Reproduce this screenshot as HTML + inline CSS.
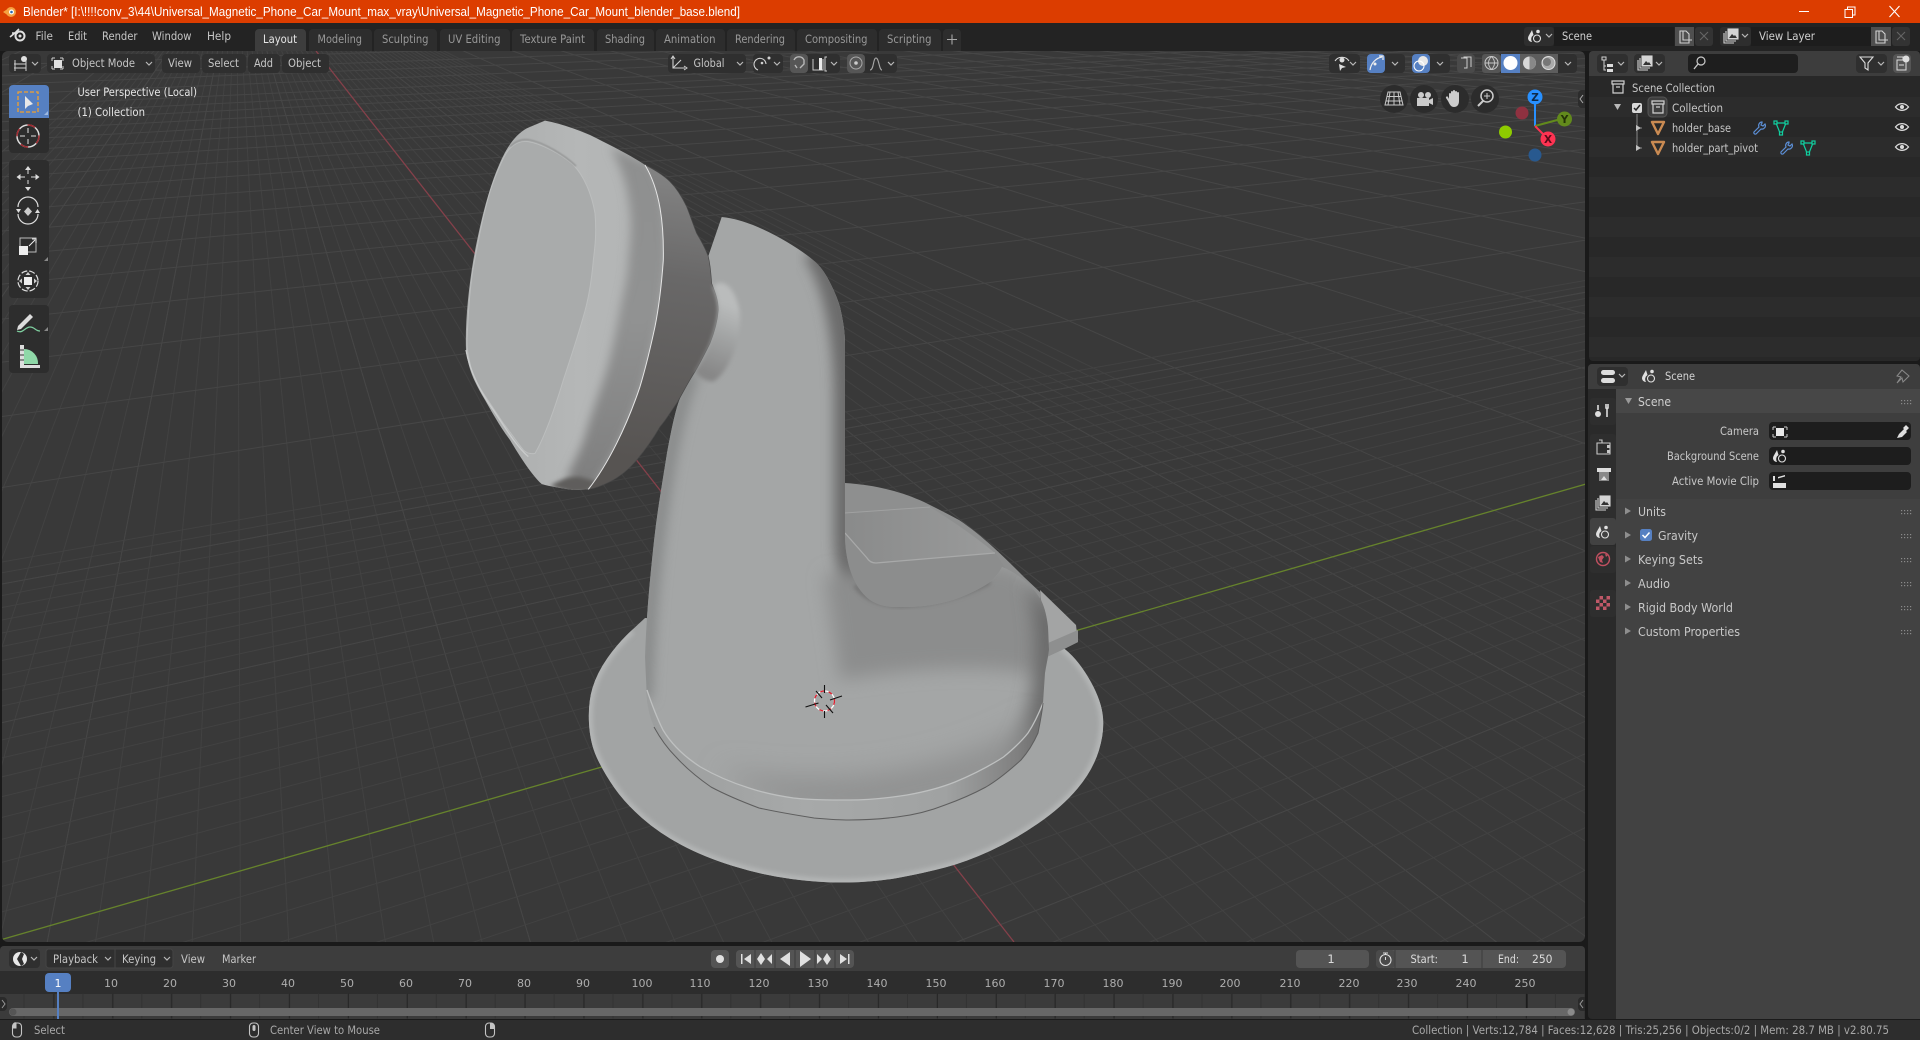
<!DOCTYPE html>
<html><head><meta charset="utf-8"><title>Blender</title>
<style>
html,body{margin:0;padding:0;background:#1a1a1a;overflow:hidden;width:1920px;height:1040px}
svg{display:block}
text{font-family:"DejaVu Sans",sans-serif;font-size:11.5px;fill:#c6c6c6;white-space:pre}
.tab{fill:#989898}
.num{fill:#aeaeae;font-size:11px;text-anchor:middle}
.lab{fill:#c8c8c8}
.p{fill:#c8c8c8;font-size:12px}
</style></head><body>
<svg width="1920" height="1040" viewBox="0 0 1920 1040" xmlns="http://www.w3.org/2000/svg">
<defs>
<clipPath id="vp"><rect x="2" y="51" width="1583" height="891" rx="6"/></clipPath>
<filter id="b2" x="-20%" y="-20%" width="140%" height="140%"><feGaussianBlur stdDeviation="2"/></filter>
<filter id="b6" x="-30%" y="-30%" width="160%" height="160%"><feGaussianBlur stdDeviation="6"/></filter>
<filter id="b9" x="-30%" y="-30%" width="160%" height="160%"><feGaussianBlur stdDeviation="9"/></filter>
<filter id="b14" x="-40%" y="-40%" width="180%" height="180%"><feGaussianBlur stdDeviation="14"/></filter>
<path id="chev" d="M0 0l3 3 3-3" fill="none" stroke="#b8b8b8" stroke-width="1.2"/>
<g id="scn"><path d="M4 1C2 5 0 7 0 9.5A4 4 0 0 0 4 13A5 5 0 0 1 5.5 6Z" fill="#e0e0e0"/><circle cx="9" cy="9.5" r="3.5" fill="none" stroke="#e0e0e0" stroke-width="1.1"/><circle cx="10" cy="2.5" r="1.8" fill="#e0e0e0"/></g>
<g id="lay" fill="none" stroke="#d4d4d4" stroke-width="1.1"><rect x="4" y="0" width="10" height="10" fill="#d4d4d4"/><path d="M5 9l3-4 2 2 1-1 2 3z" fill="#333" stroke="none"/><path d="M2 2v10h10M0 4v10h10"/></g>
<g id="eye"><path d="M-6.5 0C-3-4.5 3-4.5 6.5 0C3 4.500-3 4.500-6.5 0Z" fill="none" stroke="#dcdcdc" stroke-width="1.3"/><circle r="2" fill="#dcdcdc"/></g>
<path id="tri" d="M-6-5H6L0 7Z" fill="none" stroke="#c98a52" stroke-width="2.4" stroke-linejoin="round"/>
<g id="wr" fill="none" stroke="#5c8fd6" stroke-width="1.2"><path d="M7 0a3.5 3.5 0 0 0-3 5L-1 10a1.5 1.5 0 0 0 2 2L6 7A3.5 3.500 0 0 0 10 2L8 4 6 3 7 1Z"/></g>
<g id="ms" fill="none" stroke="#10d0a0" stroke-width="1.2"><path d="M-5-4H5L1 6H-1Z"/><rect x="-7" y="-6" width="3" height="3" fill="#282828"/><rect x="4" y="-6" width="3" height="3" fill="#282828"/><rect x="-1.5" y="5" width="3" height="3" fill="#282828"/></g>
<g id="coll" fill="none" stroke="#d0d0d0" stroke-width="1.2"><path d="M-6-6H6V-3H-6ZM-5-3V6H5V-3M-2 0H2"/></g>
<g id="grip" fill="#8a8a8a"><rect x="0" y="0" width="1.2" height="1.2"/><rect x="3" y="0" width="1.2" height="1.2"/><rect x="6" y="0" width="1.2" height="1.2"/><rect x="9" y="0" width="1.2" height="1.2"/><rect x="0" y="3" width="1.2" height="1.2"/><rect x="3" y="3" width="1.2" height="1.2"/><rect x="6" y="3" width="1.2" height="1.2"/><rect x="9" y="3" width="1.2" height="1.2"/></g>
<path id="rt" d="M0-3.5L6 0 0 3.5Z" fill="#8e8e8e"/>
<g id="mouse" fill="none" stroke="#c4c4c4" stroke-width="1.1"><rect x="-4.5" y="-7" width="9" height="14" rx="3.5"/></g>

<clipPath id="bodyc"><path d="M721.7 217C733 218 745 222 753 225C765 230 777 236 787 242C797 248 806 254 813 260C819 265 823 270 827 277C833 288 837 297 840 307C843 320 845 332 845 343L845 533C845 545 846 551 847 557C849 568 852 576 855.5 583C860 591 866 598 873 602C881 606 889 607 897 607C908 607 920 607 931 605C943 603 955 600 966 595C975 591 983 587 990 582C995 578 999 573 1002 567C1010 570 1017 575 1024 580C1031 586 1037 593 1041 600C1045 608 1047 618 1048 627L1049 650C1048 658 1046 666 1045 673L1043 703C1042 713 1040 723 1038 733C1034 742 1028 752 1021 760C1010 770 998 780 986 787C973 794 959 800 945 805C930 811 914 815 897 817C881 819 865 820 849 820C837 820 826 819 814 818C795 815 777 812 759 808C743 802 726 795 711 787C698 778 686 768 676 757C667 748 660 738 654 727C650 718 648 709 647 700L645 657C646 628 648 600 651 570C653 550 655 530 658 510C661 490 664 472 667 453C670 437 673 421 677 407C681 394 687 383 693 373L708 257Z"/></clipPath>
<clipPath id="discc"><path d="M631.5 630.5Q618 643 607.5 658Q597 673 592.5 688Q588 703 589 723Q590 743 597 758Q604 773 614.5 788Q625 803 642 818Q659 833 681.5 845Q704 857 733 866Q762 875 791.5 879Q821 883 848.5 882.5Q876 882 900 877.5Q924 873 945 867.5Q966 862 990 851Q1014 840 1038 823.5Q1062 807 1077.5 788.5Q1093 770 1099 750Q1105 730 1102.5 713.5Q1100 697 1088 677Q1076 657 1062 647L1048 637L645 618Z"/></clipPath>
<clipPath id="headc"><path d="M255 32C300 40 350 58 390 75C450 105 510 135 555 165C600 240 612 340 610 450C605 520 595 600 585 650C570 720 555 780 540 830C520 890 495 950 470 1000C445 1050 415 1100 385 1138L340 1140C310 1135 270 1130 245 1122C215 1095 180 1040 150 990C120 950 95 905 75 870C45 820 25 780 18 720C15 640 25 540 40 450C60 340 85 240 115 170C140 110 165 75 200 55Z"/></clipPath>

<linearGradient id="rim" gradientUnits="userSpaceOnUse" x1="20" y1="0" x2="500" y2="0"><stop offset="0" stop-color="#a9abab"/><stop offset=".7" stop-color="#b5b7b7"/><stop offset="1" stop-color="#b3b5b5"/></linearGradient>
<linearGradient id="band" gradientUnits="userSpaceOnUse" x1="0" y1="110" x2="0" y2="1138"><stop offset="0" stop-color="#8e8f8f"/><stop offset=".5" stop-color="#919292"/><stop offset="1" stop-color="#7e7e7e"/></linearGradient>
<linearGradient id="cone" gradientUnits="userSpaceOnUse" x1="640" y1="200" x2="520" y2="1050"><stop offset="0" stop-color="#828282"/><stop offset=".35" stop-color="#696868"/><stop offset="1" stop-color="#575452"/></linearGradient>
<linearGradient id="ball" gradientUnits="userSpaceOnUse" x1="745" y1="790" x2="825" y2="590"><stop offset="0" stop-color="#878787"/><stop offset=".6" stop-color="#a4a6a6"/><stop offset="1" stop-color="#babcbc"/></linearGradient>
<linearGradient id="collar" gradientUnits="userSpaceOnUse" x1="647" y1="0" x2="1045" y2="0"><stop offset="0" stop-color="#9c9e9e"/><stop offset=".4" stop-color="#a7a9a9"/><stop offset=".75" stop-color="#a0a2a2"/><stop offset=".93" stop-color="#808080"/><stop offset="1" stop-color="#6c6c6c"/></linearGradient>
<linearGradient id="slab" gradientUnits="userSpaceOnUse" x1="850" y1="0" x2="1000" y2="0"><stop offset="0" stop-color="#8a8b8b"/><stop offset="1" stop-color="#9a9b9b"/></linearGradient>
</defs>

<!-- title bar -->
<rect x="0" y="0" width="1920" height="23" fill="#dc3d00"/>
<circle cx="11" cy="12" r="5" fill="#f5a040"/><path d="M3 12l6-4v8z" fill="#f5a040"/><circle cx="11.5" cy="12" r="2.5" fill="#fff"/><circle cx="11.5" cy="12" r="1.3" fill="#2a6ab0"/>
<text x="23" y="16" textLength="717" lengthAdjust="spacingAndGlyphs" style="font-family:'Liberation Sans',sans-serif;font-size:13px;fill:#fff">Blender* [I:\!!!!conv_3\44\Universal_Magnetic_Phone_Car_Mount_max_vray\Universal_Magnetic_Phone_Car_Mount_blender_base.blend]</text>
<path d="M1799 11.5h10" stroke="#fff" stroke-width="1"/>
<path d="M1845 9.5h7.5v8h-7.5zM1847.5 9.5v-2.5h7.500v8h-2.500" fill="none" stroke="#fff" stroke-width="1"/>
<path d="M1889.5 6l10 11M1899.5 6l-10 11" stroke="#fff" stroke-width="1.1"/>

<!-- top bar -->
<rect x="0" y="23" width="1920" height="28" fill="#232323"/>
<circle cx="20" cy="36" r="4.5" fill="none" stroke="#e0e0e0" stroke-width="2"/><circle cx="20" cy="36" r="1.5" fill="#e0e0e0"/><path d="M10 37l6-5 3-3M12 33h6" stroke="#e0e0e0" stroke-width="1.6" fill="none"/>
<text x="35.5" y="40" textLength="17.5" lengthAdjust="spacingAndGlyphs">File</text>
<text x="68" y="40" textLength="19" lengthAdjust="spacingAndGlyphs">Edit</text>
<text x="102" y="40" textLength="35.5" lengthAdjust="spacingAndGlyphs">Render</text>
<text x="152" y="40" textLength="39.5" lengthAdjust="spacingAndGlyphs">Window</text>
<text x="207" y="40" textLength="24" lengthAdjust="spacingAndGlyphs">Help</text>
<g fill="#2d2d2d">
<path d="M255 51V33a4 4 0 0 1 4-4h43a4 4 0 0 1 4 4v18z" fill="#3d3d3d"/>
<path d="M309 51V33a4 4 0 0 1 4-4h55a4 4 0 0 1 4 4v18z"/>
<path d="M374 51V33a4 4 0 0 1 4-4h55a4 4 0 0 1 4 4v18z"/>
<path d="M440 51V33a4 4 0 0 1 4-4h62a4 4 0 0 1 4 4v18z"/>
<path d="M512 51V33a4 4 0 0 1 4-4h74a4 4 0 0 1 4 4v18z"/>
<path d="M597 51V33a4 4 0 0 1 4-4h49a4 4 0 0 1 4 4v18z"/>
<path d="M656 51V33a4 4 0 0 1 4-4h61a4 4 0 0 1 4 4v18z"/>
<path d="M727 51V33a4 4 0 0 1 4-4h60a4 4 0 0 1 4 4v18z"/>
<path d="M797 51V33a4 4 0 0 1 4-4h72a4 4 0 0 1 4 4v18z"/>
<path d="M879 51V33a4 4 0 0 1 4-4h54a4 4 0 0 1 4 4v18z"/>
<path d="M943 51V33a4 4 0 0 1 4-4h10a4 4 0 0 1 4 4v18z"/>
</g>
<text x="263" y="43" textLength="34" lengthAdjust="spacingAndGlyphs" style="fill:#e6e6e6">Layout</text>
<text class="tab" x="317.5" y="43" textLength="44.5" lengthAdjust="spacingAndGlyphs">Modeling</text>
<text class="tab" x="382" y="43" textLength="46.5" lengthAdjust="spacingAndGlyphs">Sculpting</text>
<text class="tab" x="448" y="43" textLength="52.5" lengthAdjust="spacingAndGlyphs">UV Editing</text>
<text class="tab" x="520" y="43" textLength="65" lengthAdjust="spacingAndGlyphs">Texture Paint</text>
<text class="tab" x="605" y="43" textLength="40" lengthAdjust="spacingAndGlyphs">Shading</text>
<text class="tab" x="664" y="43" textLength="51.5" lengthAdjust="spacingAndGlyphs">Animation</text>
<text class="tab" x="735" y="43" textLength="50" lengthAdjust="spacingAndGlyphs">Rendering</text>
<text class="tab" x="805" y="43" textLength="62.5" lengthAdjust="spacingAndGlyphs">Compositing</text>
<text class="tab" x="887" y="43" textLength="44.5" lengthAdjust="spacingAndGlyphs">Scripting</text>
<path d="M952 34.5v10M947 39.5h10" stroke="#a8a8a8" stroke-width="1.1"/>

<!-- scene selectors -->
<rect x="1524" y="27" width="30" height="19" rx="3" fill="#2e2e2e"/>
<use href="#scn" x="1528" y="29"/><use href="#chev" x="1546" y="34"/>
<rect x="1554" y="27" width="120" height="19" fill="#1d1d1d"/>
<text x="1562" y="40" textLength="30" lengthAdjust="spacingAndGlyphs" style="fill:#d0d0d0">Scene</text>
<rect x="1675" y="27" width="19" height="19" fill="#4f4f4f"/><path d="M1680 31h6l3 3v9h-9z M1683 31v9h9" fill="none" stroke="#d0d0d0" stroke-width="1.1"/>
<rect x="1695" y="27" width="18" height="19" rx="3" fill="#333"/><path d="M1700 32l8 8M1708 32l-8 8" stroke="#666" stroke-width="1.1"/>
<rect x="1720" y="27" width="31" height="19" rx="3" fill="#2e2e2e"/>
<use href="#lay" x="1724" y="29"/><use href="#chev" x="1742" y="34"/>
<rect x="1751" y="27" width="120" height="19" fill="#1d1d1d"/>
<text x="1759" y="40" textLength="56" lengthAdjust="spacingAndGlyphs" style="fill:#d0d0d0">View Layer</text>
<rect x="1871" y="27" width="20" height="19" fill="#4f4f4f"/><path d="M1876 31h6l3 3v9h-9z M1879 31v9h9" fill="none" stroke="#d0d0d0" stroke-width="1.1"/>
<rect x="1892" y="27" width="18" height="19" rx="3" fill="#333"/><path d="M1897 32l8 8M1905 32l-8 8" stroke="#666" stroke-width="1.1"/>

<!-- 3D viewport -->
<g clip-path="url(#vp)">
<rect x="0" y="51" width="1590" height="895" fill="#393939"/>
<g transform="translate(237 -50) scale(.87) translate(-237 50)" fill="none" stroke-width="1.15">
<path stroke="#424242" d="M237-50L-991 1100M237-50L-935 1100M237-50L-879 1100M237-50L-823 1100M237-50L-767 1100M237-50L-711 1100M237-50L-655 1100M237-50L-599 1100M237-50L-543 1100M237-50L-487 1100M237-50L-431 1100M237-50L-375 1100M237-50L-319 1100M237-50L-263 1100M237-50L-207 1100M237-50L-151 1100M237-50L-95 1100M237-50L-39 1100M237-50L17 1100M237-50L73 1100M237-50L129 1100M237-50L185 1100M237-50L241 1100M237-50L297 1100M237-50L353 1100M237-50L409 1100M237-50L465 1100M237-50L521 1100M237-50L577 1100M237-50L633 1100M237-50L689 1100M237-50L745 1100M237-50L801 1100M237-50L857 1100M237-50L913 1100M237-50L969 1100M237-50L1025 1100M237-50L1081 1100M237-50L1193 1100M237-50L1249 1100M237-50L1305 1100M237-50L1361 1100M237-50L1417 1100M237-50L1473 1100M237-50L1529 1100M237-50L1585 1100M237-50L1641 1100M237-50L1697 1100M237-50L1753 1100M237-50L1809 1100M237-50L1865 1100M237-50L1921 1100M237-50L1977 1100M237-50L2033 1100M237-50L2089 1100M237-50L2145 1100M237-50L2201 1100M237-50L2257 1100M237-50L2313 1100M237-50L2369 1100M237-50L2425 1100M237-50L2481 1100M237-50L2537 1100M237-50L2593 1100"/>
<path stroke="#464646" d="M237-50L-1103 1100M237-50L-1663 1100M237-50L-2223 1100M237-50L2817 1100M237-50L3377 1100M237-50L3937 1100M237-50L4497 1100M237-50L5057 1100M237-50L5617 1100M237-50L6177 1100M237-50L6737 1100M237-50L7297 1100M237-50L7857 1100M237-50L8417 1100M237-50L8977 1100M237-50L9537 1100M237-50L10097 1100M237-50L10657 1100M237-50L11217 1100M237-50L11777 1100M237-50L12337 1100M237-50L12897 1100M237-50L13457 1100M237-50L17 1100M237-50L577 1100M237-50L1697 1100M237-50L2257 1100M237-50L-543 1100"/>
</g>
<g transform="translate(3443 -50) scale(.87) translate(-3443 50)" fill="none" stroke-width="1.15">
<path stroke="#424242" d="M3443-50L-3023 1100M3443-50L-2911 1100M3443-50L-2799 1100M3443-50L-2687 1100M3443-50L-2575 1100M3443-50L-2463 1100M3443-50L-2351 1100M3443-50L-2239 1100M3443-50L-2127 1100M3443-50L-2015 1100M3443-50L-1903 1100M3443-50L-1791 1100M3443-50L-1679 1100M3443-50L-1567 1100M3443-50L-1455 1100M3443-50L-1343 1100M3443-50L-1231 1100M3443-50L-1119 1100M3443-50L-1007 1100M3443-50L-895 1100M3443-50L-783 1100M3443-50L-671 1100M3443-50L-447 1100M3443-50L-335 1100M3443-50L-223 1100M3443-50L-111 1100M3443-50L1 1100M3443-50L113 1100M3443-50L225 1100M3443-50L337 1100M3443-50L449 1100M3443-50L561 1100M3443-50L673 1100M3443-50L785 1100M3443-50L897 1100M3443-50L1009 1100M3443-50L1121 1100M3443-50L1233 1100M3443-50L1345 1100"/>
<path stroke="#464646" d="M3443-50L-3919 1100M3443-50L-5039 1100M3443-50L-6159 1100M3443-50L-7279 1100M3443-50L-8399 1100M3443-50L-9519 1100M3443-50L-10639 1100M3443-50L-11759 1100M3443-50L-12879 1100M3443-50L-13999 1100M3443-50L-15119 1100M3443-50L-16239 1100M3443-50L-17359 1100M3443-50L-18479 1100M3443-50L-19599 1100M3443-50L-20719 1100M3443-50L-22000 1100M3443-50L-24000 1100M3443-50L-26000 1100M3443-50L-28000 1100M3443-50L-31000 1100M3443-50L561 1100M3443-50L-1679 1100M3443-50L-2799 1100"/>
</g>
<path d="M316 51L1014 942" stroke="#85404a" stroke-width="1.3"/>
<path d="M0 940L1586 484" stroke="#66832c" stroke-width="1.3"/>

<!-- model: disc -->
<path d="M631.5 630.5Q618 643 607.5 658Q597 673 592.5 688Q588 703 589 723Q590 743 597 758Q604 773 614.5 788Q625 803 642 818Q659 833 681.5 845Q704 857 733 866Q762 875 791.5 879Q821 883 848.5 882.5Q876 882 900 877.5Q924 873 945 867.5Q966 862 990 851Q1014 840 1038 823.5Q1062 807 1077.5 788.5Q1093 770 1099 750Q1105 730 1102.5 713.5Q1100 697 1088 677Q1076 657 1062 647L1048 637L645 618Z" fill="#a2a4a4"/>
<g clip-path="url(#discc)"><path d="M631.5 630.5Q618 643 607.5 658Q597 673 592.5 688Q588 703 589 723Q590 743 597 758Q604 773 614.5 788Q625 803 642 818Q659 833 681.5 845Q704 857 733 866Q762 875 791.5 879Q821 883 848.5 882.5Q876 882 900 877.5Q924 873 945 867.5Q966 862 990 851Q1014 840 1038 823.5Q1062 807 1077.5 788.5Q1093 770 1099 750Q1105 730 1102.5 713.5Q1100 697 1088 677Q1076 657 1062 647" fill="none" stroke="#b3b5b5" stroke-width="8" filter="url(#b2)"/></g>
<!-- tab -->
<path d="M1040 590L1076 625L1078 642L1062 650L1047 657Z" fill="#a3a4a4"/>
<path d="M1048 643L1078 630L1078 642L1062 650L1047 657Z" fill="#8e8f8f"/>
<!-- plateau -->
<path d="M845 483C860 484 875 486 890 490C902 493 913 497 924 502C936 508 948 514 959 520C971 528 982 537 993 547C1004 557 1014 567 1024 577L1041 593L1040 620L845 620Z" fill="#8e8f8f"/>
<path d="M845 513L930 507C951 520 973 535 995 553L873 563L845 533Z" fill="url(#slab)"/>
<path d="M845 533L873 563L995 553L1010 575L950 615L850 615Z" fill="#8c8d8d"/>
<path d="M845 513L930 507" stroke="#a0a1a1" stroke-width="1" fill="none"/>
<path d="M845 533L867 558Q870 563 876 563L995 553" stroke="#a8a9a9" stroke-width="1.3" fill="none"/>
<!-- body -->
<g clip-path="url(#bodyc)">
<rect x="640" y="210" width="420" height="620" fill="#a4a6a6"/>
<path d="M693 373C670 420 650 560 645 700" fill="none" stroke="#868888" stroke-width="14" filter="url(#b6)"/>
<path d="M815 250C838 285 847 340 847 400L847 540C848 570 857 592 877 607" fill="none" stroke="#6c6c6c" stroke-width="26" filter="url(#b6)"/>
<path d="M825 575L1010 565L1060 610L1055 680C1000 660 900 670 840 680Z" fill="#8c8d8d" filter="url(#b9)"/>
<path d="M1028 580L1062 620L1055 740L1012 785L1002 765C1034 720 1045 660 1028 580Z" fill="#686868" filter="url(#b9)"/>
<path d="M720 770C800 785 930 785 1040 720L1040 745C990 800 900 815 830 812C790 810 750 795 720 770Z" fill="#8f9090" filter="url(#b14)"/>
<path d="M855 585C865 600 885 606 905 605C935 604 965 595 990 582" fill="none" stroke="#707070" stroke-width="4" filter="url(#b2)"/>
</g>
<!-- collar -->
<path d="M647 690C652 705 657 718 663 730C672 745 685 757 700.5 767C716 776 733 783 749 788C764 793 779 796 793.5 798C812 800 830 800 849 800C869 800 888 798 907 795C924 792 940 788 955 782C972 775 988 767 1003.5 757C1012 750 1021 742 1028 733C1034 724 1039 713 1043 703C1042 713 1040 723 1038 733C1034 742 1028 752 1021 760C1010 770 998 780 986 787C973 794 959 800 945 805C930 811 914 815 897 817C881 819 865 820 849 820C837 820 826 819 814 818C795 815 777 812 759 808C743 802 726 795 711 787C698 778 686 768 676 757C667 748 660 738 654 727C650 718 648 709 647 700Z" fill="url(#collar)"/>
<path d="M647 690C652 705 657 718 663 730C672 745 685 757 700.5 767C716 776 733 783 749 788C764 793 779 796 793.5 798C812 800 830 800 849 800C869 800 888 798 907 795C924 792 940 788 955 782C972 775 988 767 1003.5 757C1012 750 1021 742 1028 733C1034 724 1039 713 1043 703" fill="none" stroke="#bec0c0" stroke-width="1.3"/>
<path d="M1043 703C1042 713 1040 723 1038 733C1034 742 1028 752 1021 760C1010 770 998 780 986 787C973 794 959 800 945 805C930 811 914 815 897 817C881 819 865 820 849 820C837 820 826 819 814 818C795 815 777 812 759 808C743 802 726 795 711 787C698 778 686 768 676 757C667 748 660 738 654 727" fill="none" stroke="#5e5e5e" stroke-width="1"/>

<!-- head (crop coordinates, 3x) -->
<g transform="translate(460 110) scale(.33333)">
<path d="M555 165C585 180 610 195 630 215C650 235 668 265 680 290C690 315 700 345 710 370C725 395 738 420 745 440C752 470 753 495 755 520C765 545 775 570 775 600C772 640 762 670 750 700C735 730 720 760 705 785C685 815 668 850 650 880C632 905 618 930 600 950C580 985 555 1020 530 1050C505 1080 480 1100 450 1115C430 1125 405 1135 385 1138C415 1100 445 1050 470 1000C495 950 520 890 540 830C555 780 570 720 585 650C595 600 605 520 610 450C612 340 600 240 555 165Z" fill="url(#cone)" stroke="#4a4a4a" stroke-width="2"/>
<path d="M760 530C785 500 825 530 838 600C848 670 815 780 760 815C735 815 715 800 705 785C745 725 770 660 775 600C775 570 765 545 760 530Z" fill="url(#ball)" filter="url(#b6)"/>
<path d="M255 32C300 40 350 58 390 75C450 105 510 135 555 165C600 240 612 340 610 450C605 520 595 600 585 650C570 720 555 780 540 830C520 890 495 950 470 1000C445 1050 415 1100 385 1138L340 1140C310 1135 270 1130 245 1122C215 1095 180 1040 150 990C120 950 95 905 75 870C45 820 25 780 18 720C15 640 25 540 40 450C60 340 85 240 115 170C140 110 165 75 200 55Z" fill="url(#rim)"/>
<g clip-path="url(#headc)">
<path d="M450 110L570 160C620 240 620 340 620 450C615 520 605 600 595 650C580 720 565 780 550 830C530 890 505 950 480 1000C455 1050 425 1100 395 1145L320 1100C350 1040 370 1000 380 960C405 880 425 830 440 780C460 710 470 650 480 600C495 530 505 490 505 450C512 390 515 340 510 300C505 260 500 230 490 200C480 170 465 135 450 110Z" fill="url(#band)" filter="url(#b14)"/>
<path d="M270 1128C300 1110 330 1095 360 1100L410 1115L385 1145L340 1150Z" fill="#5f5d5b" filter="url(#b6)"/>
</g>
<path d="M205 95C240 100 300 130 340 165C370 195 395 250 405 310C410 370 405 410 400 450C395 510 385 570 370 620C350 690 330 750 310 810C295 860 285 890 270 930C255 970 240 1005 225 1030C210 1033 200 1030 190 1020C170 995 150 965 130 940C110 910 90 880 70 850C50 820 35 790 30 760C20 720 20 700 22 670C25 600 30 530 40 470C52 410 62 350 75 300C85 260 95 225 110 190C125 155 135 130 150 115C165 100 185 92 205 95Z" fill="#a9abab" stroke="#bcbebe" stroke-width="3"/>
<path d="M150 110C170 90 190 86 210 90C250 98 310 132 348 168" fill="none" stroke="#8f9090" stroke-width="4" filter="url(#b2)"/>
<path d="M18 720C30 790 70 860 100 900C140 960 170 1010 205 1040" fill="none" stroke="#c9cbcb" stroke-width="4"/>
<path d="M555 165C600 240 612 340 610 450C605 520 595 600 585 650C570 720 555 780 540 830C520 890 495 950 470 1000C445 1050 415 1100 385 1138" fill="none" stroke="#e6e6e6" stroke-width="3"/>
</g>

<!-- 3D cursor -->
<circle cx="824.5" cy="701" r="10" fill="none" stroke="#fff" stroke-width="1.3"/>
<circle cx="824.5" cy="701" r="10" fill="none" stroke="#e02030" stroke-width="1.3" stroke-dasharray="4 4.5"/>
<path d="M824.5 685v8M824.5 711v7M805.500 707l13-4M830 700l12-4M816 691l6 7M826 705l7 8" stroke="#111" stroke-width="1.1"/>
</g>

<!-- viewport header -->
<g fill="#2f2f2f">
<rect x="9" y="54" width="32" height="19" rx="4"/>
<rect x="47" y="54" width="108" height="19" rx="4"/>
<rect x="162" y="54" width="38" height="19" rx="4"/>
<rect x="202" y="54" width="44" height="19" rx="4"/>
<rect x="248" y="54" width="32" height="19" rx="4"/>
<rect x="282" y="54" width="47" height="19" rx="4"/>
<rect x="668" y="54" width="78" height="19" rx="4"/>
<rect x="753" y="54" width="30" height="19" rx="4"/>
<rect x="790" y="54" width="50" height="19" rx="4"/>
<rect x="847" y="54" width="50" height="19" rx="4"/>
<rect x="1329" y="54" width="31" height="19" rx="4"/>
<rect x="1367" y="54" width="38" height="19" rx="4"/>
<rect x="1412" y="54" width="38" height="19" rx="4"/>
<rect x="1482" y="54" width="95" height="19" rx="4"/>
</g>
<path d="M15 60v11M26 60v11M14 64h12M14 68h12" stroke="#d0d0d0" stroke-width="1" fill="none"/><circle cx="24" cy="59" r="3" fill="#e0e0e0"/><use href="#chev" x="32" y="62"/>
<path d="M52 58h3M52 58v3M63 58h-3M63 58v3M52 69h3M52 69v-3M63 69h-3M63 69v-3" stroke="#d0d0d0" fill="none"/><rect x="54" y="60" width="8" height="8" fill="#e0e0e0"/>
<text x="72" y="67" textLength="63" lengthAdjust="spacingAndGlyphs">Object Mode</text><use href="#chev" x="146" y="62"/>
<text x="168" y="67" textLength="24" lengthAdjust="spacingAndGlyphs">View</text>
<text x="208" y="67" textLength="31" lengthAdjust="spacingAndGlyphs">Select</text>
<text x="254" y="67" textLength="19" lengthAdjust="spacingAndGlyphs">Add</text>
<text x="288" y="67" textLength="33" lengthAdjust="spacingAndGlyphs">Object</text>
<path d="M673 57v11h12M673 68l8-8" fill="none" stroke="#d0d0d0" stroke-width="1.1"/><path d="M671 59l2-3 2 3M684 66l3 2-3 2" fill="none" stroke="#d0d0d0"/>
<text x="693.5" y="67" textLength="31" lengthAdjust="spacingAndGlyphs">Global</text><use href="#chev" x="737" y="62"/>
<path d="M758 70a6 6 0 1 1 8-6" fill="none" stroke="#d0d0d0" stroke-width="1.1"/><circle cx="769" cy="58" r="1.5" fill="#d0d0d0"/><circle cx="762" cy="63" r="1.3" fill="#d0d0d0"/><use href="#chev" x="774" y="62"/>
<rect x="790" y="54" width="18" height="19" rx="4" fill="#565656"/><path d="M794 60a5.5 5.5 0 0 1 10 0v4l-4 4M797 68l-2-3" fill="none" stroke="#b8b8b8" stroke-width="1.4"/>
<path d="M813 59v11h10v-11M827 57h-2v14h2" fill="none" stroke="#c8c8c8"/><rect x="819" y="58" width="3" height="12" fill="#eaeaea"/><use href="#chev" x="831" y="62"/>
<rect x="847" y="54" width="18" height="19" rx="4" fill="#565656"/><circle cx="856" cy="63" r="6" fill="none" stroke="#aaa"/><circle cx="856" cy="63" r="1.8" fill="#ccc"/>
<path d="M870 70c4 0 3-12 6-12s3 12 6 12" fill="none" stroke="#a8a8a8" stroke-width="1.1"/><use href="#chev" x="888" y="62"/>

<circle cx="1342" cy="60" r="2.500" fill="#ddd"/><path d="M1335 61c3-5 11-5 14 0" fill="none" stroke="#ddd"/><path d="M1339 64l1 7 2-3 4-1z" fill="#ddd"/><use href="#chev" x="1350" y="62"/>
<rect x="1367" y="54" width="18" height="19" rx="4" fill="#5680c2"/><path d="M1370 70c1-7 6-12 12-13M1379 56h4v4" fill="none" stroke="#eee" stroke-width="1.2"/><circle cx="1375" cy="64" r="1.5" fill="#eee"/><use href="#chev" x="1392" y="62"/>
<rect x="1412" y="54" width="18" height="19" rx="4" fill="#5680c2"/><circle cx="1423" cy="61" r="5" fill="#e8e8e8"/><circle cx="1419" cy="66" r="5" fill="none" stroke="#fff"/><use href="#chev" x="1437" y="62"/>
<rect x="1457" y="54" width="18" height="19" rx="4" fill="#4a4a4a"/><path d="M1461 58h6v10h-3M1464 58v-1h7v10" fill="none" stroke="#ccc"/>
<rect x="1482" y="54" width="19" height="19" fill="#555" rx="3"/><circle cx="1491.5" cy="63" r="6.5" fill="none" stroke="#c8c8c8"/><path d="M1485 63h13M1491.5 56.5c-4 4-4 9 0 13M1491.5 56.5c4 4 4 9 0 13" fill="none" stroke="#c8c8c8" stroke-width=".9"/>
<rect x="1501" y="54" width="19" height="19" fill="#5680c2"/><circle cx="1510.5" cy="63" r="7" fill="#fff"/>
<rect x="1520" y="54" width="19" height="19" fill="#5d5d5d"/><circle cx="1529.5" cy="63" r="6.5" fill="#d8d8d8"/><path d="M1529.5 56.5a6.5 6.5 0 0 1 0 13z" fill="#888"/>
<rect x="1539" y="54" width="19" height="19" fill="#5d5d5d"/><circle cx="1548.5" cy="63" r="6.5" fill="#aaa" stroke="#ddd"/><circle cx="1547" cy="62" r="4" fill="#777"/>
<use href="#chev" x="1565" y="62"/>

<!-- overlay text -->
<text x="77.5" y="96" textLength="119.5" lengthAdjust="spacingAndGlyphs" style="fill:#e6e6e6">User Perspective (Local)</text>
<text x="77.5" y="116" textLength="67.5" lengthAdjust="spacingAndGlyphs" style="fill:#e6e6e6">(1) Collection</text>

<!-- tool shelf -->
<rect x="9" y="85" width="40" height="68" rx="4" fill="#2d2d2d"/>
<path d="M9 118V89a4 4 0 0 1 4-4h32a4 4 0 0 1 4 4v29z" fill="#5680c2"/>
<rect x="18" y="92" width="20" height="20" fill="none" stroke="#f0a030" stroke-width="1.3" stroke-dasharray="4 2"/>
<path d="M25 96v13l3-3 5-2z" fill="#e8e8e8"/>
<path d="M44 115l4-4v4z" fill="#9db8e0"/>
<circle cx="28" cy="136" r="11" fill="none" stroke="#ddd" stroke-width="1.5"/><circle cx="28" cy="136" r="11" fill="none" stroke="#a02a30" stroke-width="1.5" stroke-dasharray="8 9"/><path d="M28 128v5M28 139v5M20 136h5M31 136h5" stroke="#bbb" stroke-width="1.3"/>
<rect x="9" y="160" width="40" height="138" rx="4" fill="#2d2d2d"/>
<path d="M28 166l-3 4h6zM28 191l-3-4h6zM16.5 177l4-3v6zM39.5 177l-4-3v6z" fill="#ddd"/><path d="M20 177h5M31 177h5M28 170v4M28 180v4" stroke="#ddd"/>
<path d="M18 207a10 10 0 0 1 20 0M18 214a10 10 0 0 0 20 0" fill="none" stroke="#ddd" stroke-width="1.2"/><path d="M28 207l4 4.5-4 4.5-4-4.5z" fill="#ccc"/><path d="M16 209h5l-2.500 4zM35 213h5l-2.500-4z" fill="#ddd"/>
<rect x="20" y="238" width="16" height="14" fill="none" stroke="#bbb"/><rect x="19" y="246" width="9" height="9" fill="#eee"/><path d="M29 246l6-6M32 239h4v4" stroke="#eee" fill="none"/>
<path d="M44 261l4-4v4z" fill="#888"/>
<circle cx="28" cy="281" r="10" fill="none" stroke="#ddd" stroke-width="1.2" stroke-dasharray="6 2"/><rect x="24" y="277" width="8" height="8" fill="#eee"/><path d="M28 272l-2.5 3h5zM28 290l-2.5-3h5zM19 281l3-2.5v5zM37 281l-3-2.5v5z" fill="#ccc"/>
<rect x="9" y="305" width="40" height="68" rx="4" fill="#2d2d2d"/>
<path d="M18 326l12-12 3 3-12 12-4 1z" fill="#ddd"/>
<path d="M17 331c6 3 8-4 13-4s5 4 10 4" fill="none" stroke="#7fd0a0" stroke-width="1.2"/>
<path d="M44 331l4-4v4z" fill="#888"/>
<path d="M20 345h4v20h16v3H20z" fill="#ddd"/><path d="M24 364v-15a14 14 0 0 1 14 15z" fill="#8fd8a8"/>
<path d="M19 350h5M19 355h5M19 360h5" stroke="#333"/>

<!-- nav gizmo buttons -->
<g fill="#2c2c2c"><circle cx="1394" cy="99" r="14"/><circle cx="1424" cy="99" r="14"/><circle cx="1455" cy="99" r="14"/><circle cx="1485" cy="99" r="14"/></g>
<path d="M1388 92h12l3 13h-18zM1394 92v13M1387 96.5h14M1386 101h16M1390 92l-2 13M1398 92l2 13" fill="none" stroke="#c8c8c8" stroke-width="1"/>
<circle cx="1421" cy="95" r="3" fill="#ccc"/><circle cx="1428" cy="95" r="3" fill="#ccc"/><rect x="1417" y="98" width="12" height="8" fill="#ccc"/><path d="M1429 100l4-2v7l-4-2z" fill="#ccc"/>
<path d="M1449 99v-5a1 1 0 0 1 2 0v-2a1 1 0 0 1 2 0v-1a1 1 0 0 1 2 0v1a1 1 0 0 1 2 0v1a1 1 0 0 1 2 0v8c0 4-2 6-5 6s-4-2-6-6l-2-3a1 1 0 0 1 2-1z" fill="#ccc"/>
<circle cx="1487" cy="96" r="6" fill="none" stroke="#ccc" stroke-width="1.5"/><path d="M1483 101l-5 5" stroke="#ccc" stroke-width="2"/><path d="M1487 93v6M1484 96h6" stroke="#ccc"/>
<path d="M1585 90h-3a4 4 0 0 0-4 4v10a4 4 0 0 0 4 4h3z" fill="#2c2c2c"/><path d="M1583 95l-3 4 3 4" fill="none" stroke="#aaa"/>

<!-- axis gizmo -->
<path d="M1535 126V100" stroke="#2890ff" stroke-width="2"/>
<path d="M1535 126L1561 119" stroke="#628a1c" stroke-width="2"/>
<path d="M1535 126L1548 139" stroke="#ff3352" stroke-width="2"/>
<circle cx="1522" cy="113" r="6.5" fill="#8f3140"/>
<circle cx="1505.5" cy="132" r="6.5" fill="#8ecb00"/>
<circle cx="1535" cy="155" r="6.5" fill="#28598f"/>
<circle cx="1535" cy="97" r="7.5" fill="#2890ff"/><text x="1535" y="101" text-anchor="middle" style="font-size:10.5px;font-weight:bold;fill:#0e2a4a">Z</text>
<circle cx="1564.5" cy="119" r="7.5" fill="#628a1c"/><text x="1564.5" y="123" text-anchor="middle" style="font-size:10.5px;font-weight:bold;fill:#243208">Y</text>
<circle cx="1548" cy="139" r="7.5" fill="#ff3352"/><text x="1548" y="143" text-anchor="middle" style="font-size:10.5px;font-weight:bold;fill:#5a0a18">X</text>

<!-- outliner -->
<rect x="1589" y="51" width="331" height="310" rx="4" fill="#282828"/>
<path d="M1589 76V55a4 4 0 0 1 4-4h323a4 4 0 0 1 4 4v21z" fill="#3d3d3d"/>
<g fill="#2c2c2c"><rect x="1589" y="97" width="331" height="20"/><rect x="1589" y="137" width="331" height="20"/><rect x="1589" y="177" width="331" height="20"/><rect x="1589" y="217" width="331" height="20"/><rect x="1589" y="257" width="331" height="20"/><rect x="1589" y="297" width="331" height="20"/><rect x="1589" y="337" width="331" height="20"/></g>
<rect x="1597" y="54" width="31" height="19" rx="4" fill="#2f2f2f"/><path d="M1602 57h4v3h-4zM1604 60v10h2M1604 66h2" fill="none" stroke="#d0d0d0"/><rect x="1607" y="64" width="6" height="3" fill="#ddd"/><rect x="1607" y="69" width="6" height="3" fill="#ddd"/><use href="#chev" x="1618" y="62"/>
<rect x="1634" y="54" width="31" height="19" rx="4" fill="#2f2f2f"/><use href="#lay" x="1638" y="56"/><use href="#chev" x="1656" y="62"/>
<rect x="1688" y="54" width="110" height="19" rx="4" fill="#1e1e1e"/><circle cx="1701" cy="61" r="4" fill="none" stroke="#ccc" stroke-width="1.2"/><path d="M1698 64l-4 5" stroke="#ccc" stroke-width="1.3"/>
<rect x="1856" y="54" width="31" height="19" rx="4" fill="#2f2f2f"/><path d="M1860 57h13l-5 6v7l-3-2v-5z" fill="none" stroke="#ddd" stroke-width="1.1"/><use href="#chev" x="1878" y="62"/>
<rect x="1893" y="54" width="18" height="19" rx="4" fill="#555"/><path d="M1897 60h9v10h-9zM1897 57h6v3h-6M1899 65h5" fill="none" stroke="#ddd"/><circle cx="1906" cy="59" r="3.5" fill="#ddd"/>
<use href="#coll" x="1618" y="87"/>
<text x="1632" y="92" textLength="83" lengthAdjust="spacingAndGlyphs">Scene Collection</text>
<path d="M1614 104h7l-3.5 6z" fill="#b8b8b8"/>
<rect x="1632" y="103" width="10" height="10" rx="2" fill="#d8d8d8"/><path d="M1634 108l2 2 4-5" fill="none" stroke="#222" stroke-width="1.5"/>
<rect x="1648" y="97" width="19" height="20" rx="4" fill="#3e3e3e" stroke="#555"/><use href="#coll" x="1658" y="107"/>
<text x="1672" y="112" textLength="51" lengthAdjust="spacingAndGlyphs">Collection</text>
<path d="M1637 114v34M1637 128h5M1637 148h5" stroke="#888" fill="none"/>
<path d="M1636 125v6l5-3zM1636 145v6l5-3z" fill="#c0c0c0"/>
<use href="#tri" x="1658" y="127"/><use href="#tri" x="1658" y="147"/>
<text x="1672" y="132" textLength="59" lengthAdjust="spacingAndGlyphs">holder_base</text>
<text x="1672" y="152" textLength="86" lengthAdjust="spacingAndGlyphs">holder_part_pivot</text>
<use href="#wr" x="1755" y="122"/><use href="#ms" x="1781" y="127"/>
<use href="#wr" x="1782" y="142"/><use href="#ms" x="1808" y="147"/>
<use href="#eye" x="1902" y="107"/><use href="#eye" x="1902" y="127"/><use href="#eye" x="1902" y="147"/>

<!-- properties -->
<rect x="1588" y="364" width="332" height="655" rx="4" fill="#2a2a2a"/>
<path d="M1588 389V368a4 4 0 0 1 4-4h324a4 4 0 0 1 4 4v21z" fill="#3d3d3d"/>
<rect x="1616" y="389" width="304" height="630" fill="#424242"/>
<rect x="1616" y="389" width="304" height="24" fill="#474747"/>
<rect x="1616" y="413" width="304" height="86" fill="#3e3e3e"/>
<rect x="1597" y="367" width="31" height="19" rx="4" fill="#2f2f2f"/>
<rect x="1601" y="370" width="14" height="5" rx="2.5" fill="#ddd"/><rect x="1601" y="378" width="14" height="5" rx="2.5" fill="#ddd"/><use href="#chev" x="1619" y="374"/>
<use href="#scn" x="1642" y="369"/>
<text x="1665" y="380" textLength="30" lengthAdjust="spacingAndGlyphs" style="fill:#d4d4d4">Scene</text>
<path d="M1902 370l7 6-6 6-1-4-5 5 4-6-4-1z" fill="none" stroke="#8a8a8a"/>
<!-- prop tabs -->
<rect x="1590" y="398" width="26" height="27" rx="3" fill="#2e2e2e"/>
<rect x="1590" y="434" width="26" height="111" rx="3" fill="#2e2e2e"/>
<rect x="1590" y="518" width="26" height="27" rx="3" fill="#424242"/>
<rect x="1590" y="546" width="26" height="27" rx="3" fill="#2e2e2e"/>
<rect x="1590" y="590" width="26" height="27" rx="3" fill="#2e2e2e"/>
<path d="M1598 405v5M1606 404v4a2 2 0 0 0 2 0v-4M1607 409v8" stroke="#ddd" stroke-width="1.6" fill="none"/><circle cx="1598" cy="414" r="3" fill="#ddd"/>
<path d="M1597 443h13v11h-13zM1599 440h3v3h-3" fill="none" stroke="#c8c8c8" stroke-width="1.1"/><path d="M1607 445h3v3h-3zM1607 450h3v3h-3z" fill="#c8c8c8"/>
<path d="M1597 468h14v4h-14z" fill="#ddd"/><path d="M1599 472h10v9h-10z" fill="#888"/><path d="M1601 480l3-4 3 4z" fill="#ddd"/>
<use href="#lay" x="1596" y="496"/>
<use href="#scn" x="1596" y="525"/>
<circle cx="1603" cy="559" r="6.5" fill="none" stroke="#c05060" stroke-width="1.4"/><path d="M1598 557l4-2 2 2-2 3 1 3-3-1zM1605 554l3 1-2 2z" fill="#c05060"/>
<rect x="1596" y="596" width="14" height="14" fill="#c05868"/>
<path d="M1596 596h3.5v3.5h-3.5zM1603 596h3.5v3.5h-3.5zM1599.5 599.5h3.5v3.5h-3.5zM1606.5 599.5h3.5v3.5h-3.5zM1596 603h3.5v3.5h-3.5zM1603 603h3.5v3.5h-3.5zM1599.5 606.5h3.5v3.5h-3.5zM1606.5 606.5h3.5v3.5h-3.5z" fill="#2e2e2e"/>
<!-- panels -->
<path d="M1625 398h7l-3.5 6z" fill="#9a9a9a"/>
<text x="1638" y="406" textLength="33" lengthAdjust="spacingAndGlyphs" style="fill:#cfcfcf;font-size:12px">Scene</text>
<use href="#grip" x="1901" y="400"/>
<text class="lab" x="1720" y="435" textLength="39" lengthAdjust="spacingAndGlyphs">Camera</text>
<text class="lab" x="1667" y="460" textLength="92" lengthAdjust="spacingAndGlyphs">Background Scene</text>
<text class="lab" x="1672" y="485" textLength="87" lengthAdjust="spacingAndGlyphs">Active Movie Clip</text>
<rect x="1769" y="422" width="142" height="18" rx="4" fill="#1d1d1d"/>
<rect x="1769" y="447" width="142" height="18" rx="4" fill="#1d1d1d"/>
<rect x="1769" y="472" width="142" height="18" rx="4" fill="#1d1d1d"/>
<path d="M1773 427h3M1773 427v3M1787 427h-3M1787 427v3M1773 437h3M1773 437v-3M1787 437h-3M1787 437v-3" stroke="#ccc" fill="none"/><rect x="1776" y="428" width="8" height="8" fill="#e8e8e8"/>
<path d="M1897 438l2-4 5-5 3 3-5 5zM1903 428l3-3 3 3-3 3z" fill="#e0e0e0"/>
<use href="#scn" x="1773" y="449"/>
<rect x="1773" y="483" width="13" height="5" fill="#e0e0e0"/><path d="M1773 476h2v5h-2zM1778 477l7-2v1.5l-7 2z" fill="#e0e0e0"/>
<use href="#rt" x="1625" y="511"/><text class="p" x="1638" y="516" textLength="28" lengthAdjust="spacingAndGlyphs">Units</text><use href="#grip" x="1901" y="510"/>
<use href="#rt" x="1625" y="535"/><rect x="1640" y="529" width="12" height="12" rx="2.5" fill="#5680c2"/><path d="M1642.5 535l2.5 2.5 4.500-5" fill="none" stroke="#fff" stroke-width="1.5"/><text class="p" x="1658" y="540" textLength="40" lengthAdjust="spacingAndGlyphs">Gravity</text><use href="#grip" x="1901" y="534"/>
<use href="#rt" x="1625" y="559"/><text class="p" x="1638" y="564" textLength="65" lengthAdjust="spacingAndGlyphs">Keying Sets</text><use href="#grip" x="1901" y="558"/>
<use href="#rt" x="1625" y="583"/><text class="p" x="1638" y="588" textLength="32" lengthAdjust="spacingAndGlyphs">Audio</text><use href="#grip" x="1901" y="582"/>
<use href="#rt" x="1625" y="607"/><text class="p" x="1638" y="612" textLength="95" lengthAdjust="spacingAndGlyphs">Rigid Body World</text><use href="#grip" x="1901" y="606"/>
<use href="#rt" x="1625" y="631"/><text class="p" x="1638" y="636" textLength="102" lengthAdjust="spacingAndGlyphs">Custom Properties</text><use href="#grip" x="1901" y="630"/>

<!-- timeline -->
<rect x="0" y="946" width="1585" height="73" rx="4" fill="#2d2d2d"/>
<path d="M0 971V950a4 4 0 0 1 4-4h1577a4 4 0 0 1 4 4v21z" fill="#3d3d3d"/>
<rect x="0" y="994" width="1585" height="25" fill="#3b3b3b"/>
<line x1="23.5" y1="1006" x2="1585" y2="1006" stroke="#333" stroke-width="25" stroke-dasharray="1 28.45"/>
<line x1="53.5" y1="1006" x2="1585" y2="1006" stroke="#282828" stroke-width="25" stroke-dasharray="1 57.9"/>
<rect x="9" y="1008" width="1566" height="8" rx="4" fill="#676767"/>
<circle cx="13" cy="1012" r="3.5" fill="#555"/><circle cx="1571" cy="1012" r="3.5" fill="#8a8a8a"/>
<rect x="9" y="949" width="31" height="19" rx="4" fill="#2f2f2f"/>
<circle cx="20" cy="959" r="7" fill="#e8e8e8"/><path d="M21 952l-4 7 4 7 3-2-2-5 2-5z" fill="#2f2f2f"/><use href="#chev" x="31" y="957"/>
<rect x="46" y="949" width="127" height="19" rx="3" fill="#2f2f2f" stroke="#444"/><path d="M115 949v19" stroke="#444"/>
<text x="53" y="963" textLength="45" lengthAdjust="spacingAndGlyphs">Playback</text><use href="#chev" x="105" y="957"/>
<text x="122" y="963" textLength="34" lengthAdjust="spacingAndGlyphs">Keying</text><use href="#chev" x="164" y="957"/>
<text x="181" y="963" textLength="24" lengthAdjust="spacingAndGlyphs">View</text>
<text x="222" y="963" textLength="34" lengthAdjust="spacingAndGlyphs">Marker</text>
<rect x="711" y="950" width="18" height="18" rx="4" fill="#545454"/><circle cx="720" cy="959" r="4" fill="#e0e0e0"/>
<rect x="736" y="950" width="118" height="18" rx="4" fill="#545454"/>
<path d="M755 950v18M775 950v18M795 950v18M815 950v18M835 950v18" stroke="#3d3d3d"/>
<path d="M741 954h1.5v10H741zM751 954v10l-7-5z" fill="#e0e0e0"/>
<path d="M761 953l4 6-4 6-4-6zM772 954v10l-5-5z" fill="#e0e0e0"/>
<path d="M790 952v14l-10-7z" fill="#e0e0e0"/>
<path d="M800 951v16l11-8z" fill="#e0e0e0"/>
<path d="M817 954v10l5-5zM827 953l4 6-4 6-4-6z" fill="#e0e0e0"/>
<path d="M840 954v10l7-5zM848 954h1.5v10H848z" fill="#e0e0e0"/>
<rect x="1296" y="950" width="73" height="18" rx="4" fill="#545454"/>
<text x="1331" y="963" text-anchor="middle" style="fill:#dcdcdc">1</text>
<rect x="1376" y="950" width="190" height="18" rx="4" fill="#545454"/>
<rect x="1376" y="950" width="19" height="18" rx="4" fill="#4a4a4a"/>
<path d="M1395 950v18M1482 950v18" stroke="#3d3d3d"/>
<circle cx="1385.5" cy="960" r="5.5" fill="none" stroke="#ddd" stroke-width="1.1"/><path d="M1383 953h5M1385.5 953v2M1385.5 960v-3" stroke="#ddd"/>
<text x="1410.5" y="963" textLength="27.5" lengthAdjust="spacingAndGlyphs" style="fill:#dcdcdc">Start:</text>
<text x="1465" y="963" text-anchor="middle" style="fill:#dcdcdc">1</text>
<text x="1498" y="963" textLength="21" lengthAdjust="spacingAndGlyphs" style="fill:#dcdcdc">End:</text>
<text x="1532" y="963" textLength="20.5" lengthAdjust="spacingAndGlyphs" style="fill:#dcdcdc">250</text>
<!-- ruler -->
<g>
<text class="num" x="111" y="987">10</text><text class="num" x="170" y="987">20</text><text class="num" x="229" y="987">30</text><text class="num" x="288" y="987">40</text><text class="num" x="347" y="987">50</text><text class="num" x="406" y="987">60</text><text class="num" x="465" y="987">70</text><text class="num" x="524" y="987">80</text><text class="num" x="583" y="987">90</text><text class="num" x="642" y="987">100</text><text class="num" x="700" y="987">110</text><text class="num" x="759" y="987">120</text><text class="num" x="818" y="987">130</text><text class="num" x="877" y="987">140</text><text class="num" x="936" y="987">150</text><text class="num" x="995" y="987">160</text><text class="num" x="1054" y="987">170</text><text class="num" x="1113" y="987">180</text><text class="num" x="1172" y="987">190</text><text class="num" x="1230" y="987">200</text><text class="num" x="1290" y="987">210</text><text class="num" x="1349" y="987">220</text><text class="num" x="1407" y="987">230</text><text class="num" x="1466" y="987">240</text><text class="num" x="1525" y="987">250</text>
</g>
<rect x="57" y="992" width="2" height="27" fill="#5680c2"/>
<line x1="1527" y1="994" x2="1527" y2="1008" stroke="#111" stroke-width="1"/>
<rect x="45" y="973" width="26" height="19" rx="4" fill="#5680c2"/>
<text x="58" y="987" text-anchor="middle" style="font-size:11px;fill:#fff">1</text>
<path d="M0 997h3a4 4 0 0 1 4 4v6a4 4 0 0 1-4 4H0z" fill="#2a2a2a"/><path d="M2 1000l3 4-3 4" fill="none" stroke="#999"/>
<path d="M1585 997h-3a4 4 0 0 0-4 4v6a4 4 0 0 0 4 4h3z" fill="#2a2a2a"/><path d="M1583 1000l-3 4 3 4" fill="none" stroke="#999"/>

<!-- status bar -->
<rect x="0" y="1020" width="1920" height="20" fill="#2d2d2d"/>
<use href="#mouse" x="17" y="1030"/><path d="M12.5 1025a3 3 0 0 1 4-2.5v6h-4z" fill="#c4c4c4"/>
<text x="34" y="1034" textLength="31" lengthAdjust="spacingAndGlyphs" style="fill:#a8a8a8">Select</text>
<use href="#mouse" x="254" y="1030"/><rect x="252.5" y="1025" width="3" height="6" rx="1.5" fill="#c4c4c4"/>
<text x="270" y="1034" textLength="110" lengthAdjust="spacingAndGlyphs" style="fill:#a8a8a8">Center View to Mouse</text>
<use href="#mouse" x="490" y="1030"/><path d="M490 1023a3.5 3.5 0 0 1 4.5 3v3H490z" fill="#c4c4c4"/>
<text x="1412" y="1034" textLength="477" lengthAdjust="spacingAndGlyphs" style="fill:#a8a8a8">Collection | Verts:12,784 | Faces:12,628 | Tris:25,256 | Objects:0/2 | Mem: 28.7 MB | v2.80.75</text>
</svg>
</body></html>
